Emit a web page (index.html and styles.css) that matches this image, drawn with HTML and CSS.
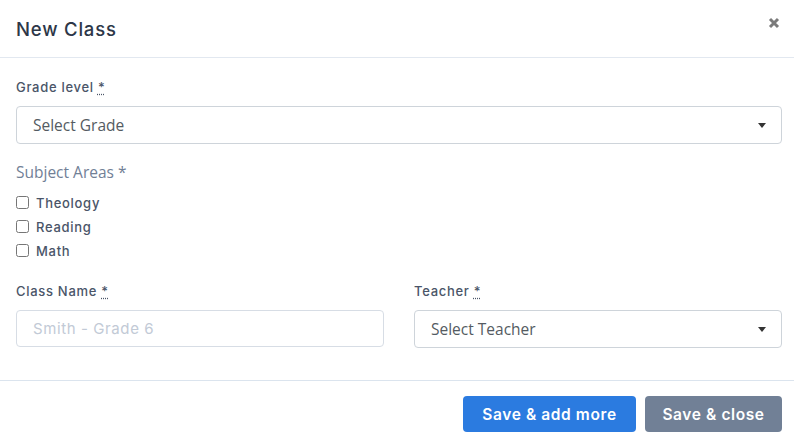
FILE: index.html
```html
<!DOCTYPE html>
<html>
<head>
<meta charset="utf-8">
<link rel="stylesheet" href="styles.css">
</head>
<body>
<div class="modal">
  <div class="modal-header">
    <h5 class="modal-title">New Class</h5>
    <button class="close" type="button" aria-label="Close">
      <svg width="12" height="12" viewBox="0 0 12 12"><path d="M2 2 L10 10 M10 2 L2 10" stroke="#7b7b7b" stroke-width="3" stroke-linecap="butt"/></svg>
    </button>
  </div>
  <div class="modal-body">
    <div class="field">
      <label class="label">Grade level <abbr title="required">*</abbr></label>
      <div class="select"><span>Select Grade</span><span class="caret"></span></div>
    </div>
    <div class="subjects">
      <div class="legend">Subject Areas *</div>
      <label class="check"><input type="checkbox"><span>Theology</span></label>
      <label class="check"><input type="checkbox"><span>Reading</span></label>
      <label class="check"><input type="checkbox"><span>Math</span></label>
    </div>
    <div class="row">
      <div class="field">
        <label class="label">Class Name <abbr title="required">*</abbr></label>
        <input class="input" type="text" placeholder="Smith - Grade 6">
      </div>
      <div class="field">
        <label class="label">Teacher <abbr title="required">*</abbr></label>
        <div class="select"><span>Select Teacher</span><span class="caret"></span></div>
      </div>
    </div>
  </div>
  <div class="modal-footer">
    <button class="btn btn-primary" type="button">Save &amp; add more</button>
    <button class="btn btn-secondary" type="button">Save &amp; close</button>
  </div>
</div>
</body>
</html>
```
FILE: styles.css
```css
* { box-sizing: border-box; }
html, body { margin: 0; padding: 0; background: #fff; }
body { font-family: "Inter", "Liberation Sans", sans-serif; color: #4a5568; }
.modal { width: 794px; background: #fff; }
.modal-header {
  display: flex; align-items: center; justify-content: space-between;
  height: 58px; padding: 0 14px 0 16px;
  border-bottom: 1px solid #e2e8f0;
}
.modal-title { margin: 0; font-size: 18.5px; font-weight: 500; color: #2d3748; letter-spacing: 0.8px; }
.close {
  border: 0; background: none; padding: 0; display: flex; margin-top: -11px; cursor: pointer;
}
.modal-body { padding: 22px 12px 32px 16px; }
.field { display: flex; flex-direction: column; }
.label { font-size: 13px; font-weight: 500; color: #4a5568; margin-bottom: 11px; line-height: 15px; letter-spacing: 0.7px; }
abbr { text-decoration: underline dotted; text-underline-offset: 2px; }
.select {
  height: 38px; border: 1px solid #ced4da; border-radius: 4px;
  display: flex; align-items: center; justify-content: space-between;
  padding: 0 15px 0 16px;
  font-family: "Open Sans", sans-serif; font-size: 15.5px; color: #545b62;
}
.caret { width: 0; height: 0; border-left: 4px solid transparent; border-right: 4px solid transparent; border-top: 5px solid #333; }
.subjects { margin-top: 17px; display: flex; flex-direction: column; }
.legend { font-family: "Open Sans", sans-serif; font-size: 15.5px; color: #718096; margin-bottom: 8px; line-height: 22px; }
.check { display: flex; align-items: center; height: 24px; font-size: 13px; font-weight: 500; color: #4a5568; letter-spacing: 0.7px; }
.check input { margin: 0 7px 2px 0; width: 13px; height: 13px; }
.row { display: grid; grid-template-columns: 368px 368px; column-gap: 30px; margin-top: 21px; }
.input {
  height: 37px; border: 1px solid #d7dde5; border-radius: 4px; padding: 0 16px;
  font-family: "Inter", sans-serif; font-size: 15px; letter-spacing: 0.6px; color: #495057;
}
.input::placeholder { color: #c2cad6; }
.modal-footer {
  border-top: 1px solid #dbe4ee; display: flex; justify-content: flex-end; gap: 9px;
  padding: 15px 12px 0 0;
}
.btn {
  height: 36px; border: 0; border-radius: 4px; color: #fff; font-family: "Inter", sans-serif;
  font-size: 15.5px; font-weight: 600; letter-spacing: 0.6px; padding: 0 10px; cursor: pointer;
}
.btn-primary { background: #2b7be0; width: 173px; }
.btn-secondary { background: #718096; width: 137px; }
```
